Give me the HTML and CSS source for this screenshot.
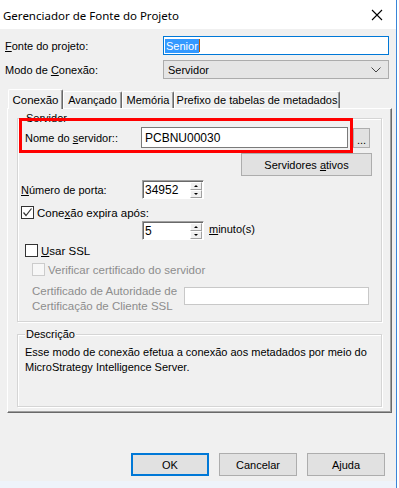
FILE: index.html
```html
<!DOCTYPE html>
<html>
<head>
    <title>Gerenciador de Fonte do Projeto</title>
    <link rel="stylesheet" href="styles.css">
</head>
<body>
<div class="window">
    <div class="titlebar">
        <span class="title">Gerenciador de Fonte do Projeto</span>
        <svg class="close" width="12" height="12" viewBox="0 0 12 12">
            <path d="M1 1 L11 11 M11 1 L1 11" stroke="#000" stroke-width="1.1" fill="none"/>
        </svg>
    </div>

    <div class="main">
        <div class="field-row first">
            <label class="lbl"><u>F</u>onte do projeto:</label>
            <div class="textbox focused"><span class="selected">Senior</span><span class="caret"></span></div>
        </div>
        <div class="field-row">
            <label class="lbl">Modo de <u>C</u>onexão:</label>
            <div class="combo">
                <span>Servidor</span>
                <svg width="10" height="6" viewBox="0 0 10 6">
                    <path d="M0.5 0.5 L5 5 L9.5 0.5" stroke="#444" stroke-width="1" fill="none"/>
                </svg>
            </div>
        </div>

        <div class="tabs">
            <div class="tab active">Conexão</div>
            <div class="tab t-adv">Avançado</div>
            <div class="tab t-mem">Memória</div>
            <div class="tab t-pre">Prefixo de tabelas de metadados</div>
        </div>

        <div class="panel">
            <div class="group server-group">
                <span class="group-title">Servidor</span>

                <div class="row name-row">
                    <label class="lbl name-lbl">Nome do <u>s</u>ervidor::</label>
                    <div class="textbox plain server-box">PCBNU00030</div>
                    <button class="btn dots">...</button>
                </div>

                <div class="row btn-row">
                    <button class="btn active-servers">Servidores <u>a</u>tivos</button>
                </div>

                <div class="row port-row">
                    <label class="lbl port-lbl"><u>N</u>úmero de porta:</label>
                    <div class="spinner">
                        <span class="spin-value">34952</span>
                        <div class="spin-btns">
                            <span class="spin-btn"><i class="up"></i></span>
                            <span class="spin-btn"><i class="down"></i></span>
                        </div>
                    </div>
                </div>

                <div class="row check-row expire-row">
                    <span class="checkbox checked">
                        <svg width="11" height="11" viewBox="0 0 11 11">
                            <path d="M1.5 5.5 L4 8.5 L9.5 1.5" stroke="#333" stroke-width="1.2" fill="none"/>
                        </svg>
                    </span>
                    <span>Cone<u>x</u>ão expira após:</span>
                </div>

                <div class="row minutes-row">
                    <div class="spinner">
                        <span class="spin-value">5</span>
                        <div class="spin-btns">
                            <span class="spin-btn"><i class="up"></i></span>
                            <span class="spin-btn"><i class="down"></i></span>
                        </div>
                    </div>
                    <span class="unit"><u>m</u>inuto(s)</span>
                </div>

                <div class="row check-row ssl-row">
                    <span class="checkbox"></span>
                    <span><u>U</u>sar SSL</span>
                </div>

                <div class="row check-row verify-row disabled">
                    <span class="checkbox off"></span>
                    <span>Verificar certificado do servidor</span>
                </div>

                <div class="row cert-row disabled">
                    <span class="cert-lbl">Certificado de Autoridade de<br>Certificação de Cliente SSL</span>
                    <div class="textbox cert-box"></div>
                </div>

                <div class="highlight"></div>
            </div>

            <div class="group desc-group">
                <span class="group-title">Descrição</span>
                <p class="desc">Esse modo de conexão efetua a conexão aos metadados por meio do MicroStrategy Intelligence Server.</p>
            </div>
        </div>

        <div class="buttons">
            <button class="btn dlg default">OK</button>
            <button class="btn dlg">Cancelar</button>
            <button class="btn dlg">Ajuda</button>
        </div>
    </div>

    <div class="strip"></div>
</div>
</body>
</html>
```

FILE: styles.css
```css
body {
    margin: 0;
    background: #ffffff;
    font-family: "Liberation Sans", Arial, sans-serif;
    font-size: 11px;
    color: #000;
}
u {
    text-decoration: underline;
    text-underline-offset: 1px;
}
.window {
    width: 396px;
    height: 488px;
    border-right: 1px solid #3a84d8;
    display: flex;
    flex-direction: column;
}
.titlebar {
    height: 29px;
    background: #fff;
    display: flex;
    align-items: center;
    justify-content: space-between;
    padding: 0 13px 0 3px;
}
.title {
    font-family: "Noto Sans", sans-serif;
    font-size: 11.5px;
    color: #000;
    margin-top: 1px;
}
.close {
    margin-top: 1px;
}
.main {
    height: 452px;
    background: #f0f0f0;
    display: flex;
    flex-direction: column;
}
.strip {
    height: 7px;
    background: #eef3fa;
}

/* top rows */
.field-row {
    display: flex;
    align-items: center;
    height: 19px;
    margin-top: 5px;
    padding-left: 5px;
}
.field-row.first {
    margin-top: 7px;
}
.lbl {
    white-space: nowrap;
}
.field-row .lbl {
    width: 158px;
}
.textbox {
    box-sizing: border-box;
    background: #fff;
    border: 1px solid #7a7a7a;
    display: flex;
    align-items: center;
}
.textbox.focused {
    width: 226px;
    height: 19px;
    border-color: #0078d7;
    padding-left: 1px;
}
.selected {
    background: #3399ff;
    color: #fff;
    padding: 0 1px;
    line-height: 14px;
}
.caret {
    width: 1px;
    height: 13px;
    background: #c05800;
}
.combo {
    box-sizing: border-box;
    width: 226px;
    height: 19px;
    background: #e5e5e5;
    border: 1px solid #acacac;
    display: flex;
    align-items: center;
    justify-content: space-between;
    padding: 0 7px 0 4px;
}

/* tabs */
.tabs {
    display: flex;
    align-items: flex-end;
    height: 19px;
    margin-top: 10px;
    padding-left: 8px;
    position: relative;
    z-index: 1;
}
.tab {
    box-sizing: border-box;
    height: 17px;
    border-left: 1px solid #fff;
    border-top: 1px solid #fff;
    border-right: 1px solid #696969;
    box-shadow: inset -1px 0 0 #a0a0a0;
    border-radius: 2px 2px 0 0;
    display: flex;
    align-items: center;
    justify-content: center;
    white-space: nowrap;
}
.tab.active {
    width: 55px;
    height: 20px;
    margin-bottom: -1px;
    background: #f0f0f0;
    font-size: 11.5px;
}
.t-adv {
    width: 59px;
}
.t-mem {
    width: 52px;
}
.t-pre {
    width: 166px;
}
.panel {
    box-sizing: border-box;
    margin-left: 7px;
    width: 385px;
    height: 305px;
    border-left: 1px solid #fff;
    border-top: 1px solid #fff;
    border-right: 1px solid #696969;
    border-bottom: 1px solid #696969;
    box-shadow: inset -1px -1px 0 #a0a0a0;
    padding: 9px 0 0 9px;
}
.group {
    position: relative;
    box-sizing: border-box;
    width: 365px;
    border: 1px solid #d5d5d5;
    box-shadow: inset 1px 1px 0 #fff, 1px 1px 0 #fff;
    padding-left: 7px;
}
.group-title {
    display: block;
    width: max-content;
    margin-top: -7px;
    padding: 0 1px;
    background: #f0f0f0;
    line-height: 13px;
}
.server-group {
    height: 204px;
}
.desc-group {
    height: 73px;
    margin-top: 12px;
}
.desc {
    margin: 4px 0 0 0;
    line-height: 15px;
    width: 345px;
}

/* server group rows */
.row {
    display: flex;
    align-items: center;
}
.name-row {
    margin-top: 2px;
    height: 21px;
}
.name-lbl {
    width: 116px;
}
.server-box {
    width: 207px;
    height: 21px;
    padding-left: 3px;
    font-size: 12px;
}
.btn {
    box-sizing: border-box;
    background: #e1e1e1;
    border: 1px solid #adadad;
    font-family: "Liberation Sans", Arial, sans-serif;
    font-size: 11px;
    color: #000;
    padding: 0;
    margin: 0;
}
.dots {
    width: 17px;
    height: 20px;
    margin-left: 5px;
    line-height: 22px;
}
.btn-row {
    justify-content: flex-end;
    margin-top: 5px;
    padding-right: 9px;
}
.active-servers {
    width: 131px;
    height: 23px;
}
.port-row {
    margin-top: 4px;
    margin-left: -4px;
    height: 19px;
}
.port-lbl {
    width: 121px;
}
.spinner {
    box-sizing: border-box;
    width: 62px;
    height: 19px;
    background: #fff;
    border-top: 1px solid #a0a0a0;
    border-left: 1px solid #a0a0a0;
    border-right: 1px solid #fff;
    border-bottom: 1px solid #fff;
    box-shadow: inset 1px 1px 0 #696969;
    display: flex;
    align-items: center;
    justify-content: space-between;
    padding: 1px 0 0 2px;
    font-size: 12px;
}
.spin-btns {
    display: flex;
    flex-direction: column;
    align-self: stretch;
    width: 12px;
    margin-right: 1px;
}
.spin-btn {
    flex: 1;
    background: #f0f0f0;
    border: 1px solid;
    border-color: #fff #a0a0a0 #a0a0a0 #fff;
    display: flex;
    align-items: center;
    justify-content: center;
}
.spin-btn i {
    width: 0;
    height: 0;
    border-left: 2px solid transparent;
    border-right: 2px solid transparent;
}
.spin-btn i.up {
    border-bottom: 2px solid #000;
}
.spin-btn i.down {
    border-top: 2px solid #000;
}
.check-row {
    gap: 3px;
    font-size: 11.5px;
}
.checkbox {
    box-sizing: border-box;
    width: 13px;
    height: 13px;
    background: #fff;
    border: 1px solid #333;
    display: flex;
    align-items: center;
    justify-content: center;
}
.checkbox.off {
    background: #f7f7f7;
    border-color: #cccccc;
}
.expire-row {
    margin-top: 7px;
    margin-left: -4px;
}
.minutes-row {
    margin-top: 2px;
    margin-left: 117px;
    gap: 5px;
}
.unit {
    margin-top: -3px;
}
.ssl-row {
    margin-top: 4px;
}
.verify-row {
    margin-top: 6px;
    margin-left: 7px;
}
.disabled {
    color: #8d8d8d;
}
.cert-row {
    margin-top: 8px;
    margin-left: 7px;
    align-items: flex-start;
}
.cert-lbl {
    width: 152px;
    line-height: 15px;
    font-size: 11.5px;
}
.cert-box {
    width: 185px;
    height: 18px;
    margin-top: 3px;
    border-color: #c8c8c8;
}

/* red annotation drawn over the dialog */
.highlight {
    position: absolute;
    left: 1px;
    top: -1px;
    width: 334px;
    height: 35px;
    box-sizing: border-box;
    border: 3px solid #ff0000;
}

/* dialog buttons */
.buttons {
    display: flex;
    justify-content: flex-end;
    gap: 10px;
    margin-top: 40px;
    padding-right: 11px;
}
.dlg {
    width: 78px;
    height: 23px;
}
.dlg.default {
    border: 2px solid #0078d7;
}
```
